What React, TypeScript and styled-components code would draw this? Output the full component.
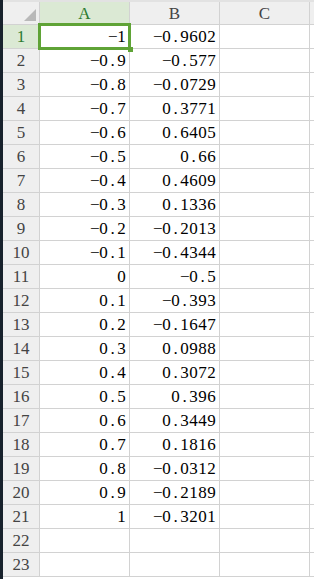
import React, { FC } from 'react';
import styled, { createGlobalStyle } from 'styled-components';

const GlobalStyle = createGlobalStyle`
  html, body { margin: 0; padding: 0; background: #fff; }
  body { font-family: "Liberation Serif", "DejaVu Serif", serif; }
`;

const colA = ['-1', '-0.9', '-0.8', '-0.7', '-0.6', '-0.5', '-0.4', '-0.3', '-0.2', '-0.1', '0', '0.1', '0.2', '0.3', '0.4', '0.5', '0.6', '0.7', '0.8', '0.9', '1'];
const colB = ['-0.9602', '-0.577', '-0.0729', '0.3771', '0.6405', '0.66', '0.4609', '0.1336', '-0.2013', '-0.4344', '-0.5', '-0.393', '-0.1647', '0.0988', '0.3072', '0.396', '0.3449', '0.1816', '-0.0312', '-0.2189', '-0.3201'];
const ROWS = 23;

const Cell: FC<{ value?: string }> = ({ value }) => (
    <DataCell>
        {value && value.replace('-', '\u2212').split('').map((c, i) => <Ch key={i}>{c}</Ch>)}
    </DataCell>
);

const App: FC = () => {
    const rows = Array.from({ length: ROWS }, (_, i) => i + 1);
    return (
        <Frame>
            <GlobalStyle />
            <Strip />
            <Sheet>
                <TopLine />
                <Corner>
                    <Triangle />
                </Corner>
                <ColHeader $active>A</ColHeader>
                <ColHeader>B</ColHeader>
                <ColHeader>C</ColHeader>
                <ColHeader $last />
                {rows.map(r => (
                    <React.Fragment key={r}>
                        <RowHeader $active={r === 1}>{r}</RowHeader>
                        {r === 1 ? (
                            <Selected>
                                <Cell value={colA[0]} />
                                <SelBox />
                                <Handle />
                            </Selected>
                        ) : (
                            <Cell value={colA[r - 1]} />
                        )}
                        <Cell value={colB[r - 1]} />
                        <Cell />
                        <Rest />
                    </React.Fragment>
                ))}
            </Sheet>
        </Frame>
    );
};
export default App;

const Frame = styled.div`
    display: flex;
    width: 314px;
    height: 579px;
    overflow: hidden;
    background: #fff;
`;

const Strip = styled.div`
    width: 3px;
    flex: none;
    background: #18222c;
`;

const Sheet = styled.div`
    flex: 1;
    display: grid;
    grid-template-columns: 37px 90px 90px 90px 1fr;
    grid-template-rows: 2px 23px repeat(${ROWS}, 24px);
    align-content: start;
    & > * { border-right: 1px solid #d2d2d2; border-bottom: 1px solid #d2d2d2; box-sizing: border-box; }
`;

const TopLine = styled.div`
    grid-column: 1 / -1;
    background: #e2e2e2;
    border: none !important;
`;

const Corner = styled.div`
    background: #efefef;
    position: relative;
`;

const Triangle = styled.div`
    position: absolute;
    right: 3px;
    bottom: 3px;
    width: 0;
    height: 0;
    border-left: 12px solid transparent;
    border-bottom: 12px solid #b9b9b9;
`;

const ColHeader = styled.div<{ $active?: boolean; $last?: boolean }>`
    background: ${p => (p.$active ? '#dbe9d4' : '#efefef')};
    color: ${p => (p.$active ? '#2c7a30' : '#444')};
    font-size: 17px;
    display: flex;
    align-items: center;
    justify-content: center;
    padding-top: 2px;
    ${p => p.$last && 'border-right: none !important;'}
`;

const RowHeader = styled.div<{ $active?: boolean }>`
    background: ${p => (p.$active ? '#dbe9d4' : '#efefef')};
    color: ${p => (p.$active ? '#2c7a30' : '#444')};
    font-size: 17px;
    display: flex;
    align-items: flex-end;
    justify-content: center;
    padding-bottom: 3px;
    line-height: 1;
`;

const DataCell = styled.div`
    display: flex;
    align-items: flex-end;
    justify-content: flex-end;
    padding: 0 3px 3px 0;
    box-sizing: border-box;
    font-size: 17px;
    line-height: 1;
    color: #000;
    height: 100%;
`;

const Ch = styled.span`
    display: inline-block;
    width: 9px;
    text-align: center;
`;

const Selected = styled.div`
    position: relative;
    & > ${DataCell} { border: none; height: 100%; }
`;

const SelBox = styled.div`
    position: absolute;
    left: -2px;
    top: -2px;
    right: -2px;
    bottom: -2px;
    border: 3px solid #5fa336;
    pointer-events: none;
`;

const Handle = styled.div`
    position: absolute;
    right: -4px;
    bottom: -4px;
    width: 5px;
    height: 5px;
    background: #5fa336;
`;

const Rest = styled.div`
    border-right: none !important;
`;
